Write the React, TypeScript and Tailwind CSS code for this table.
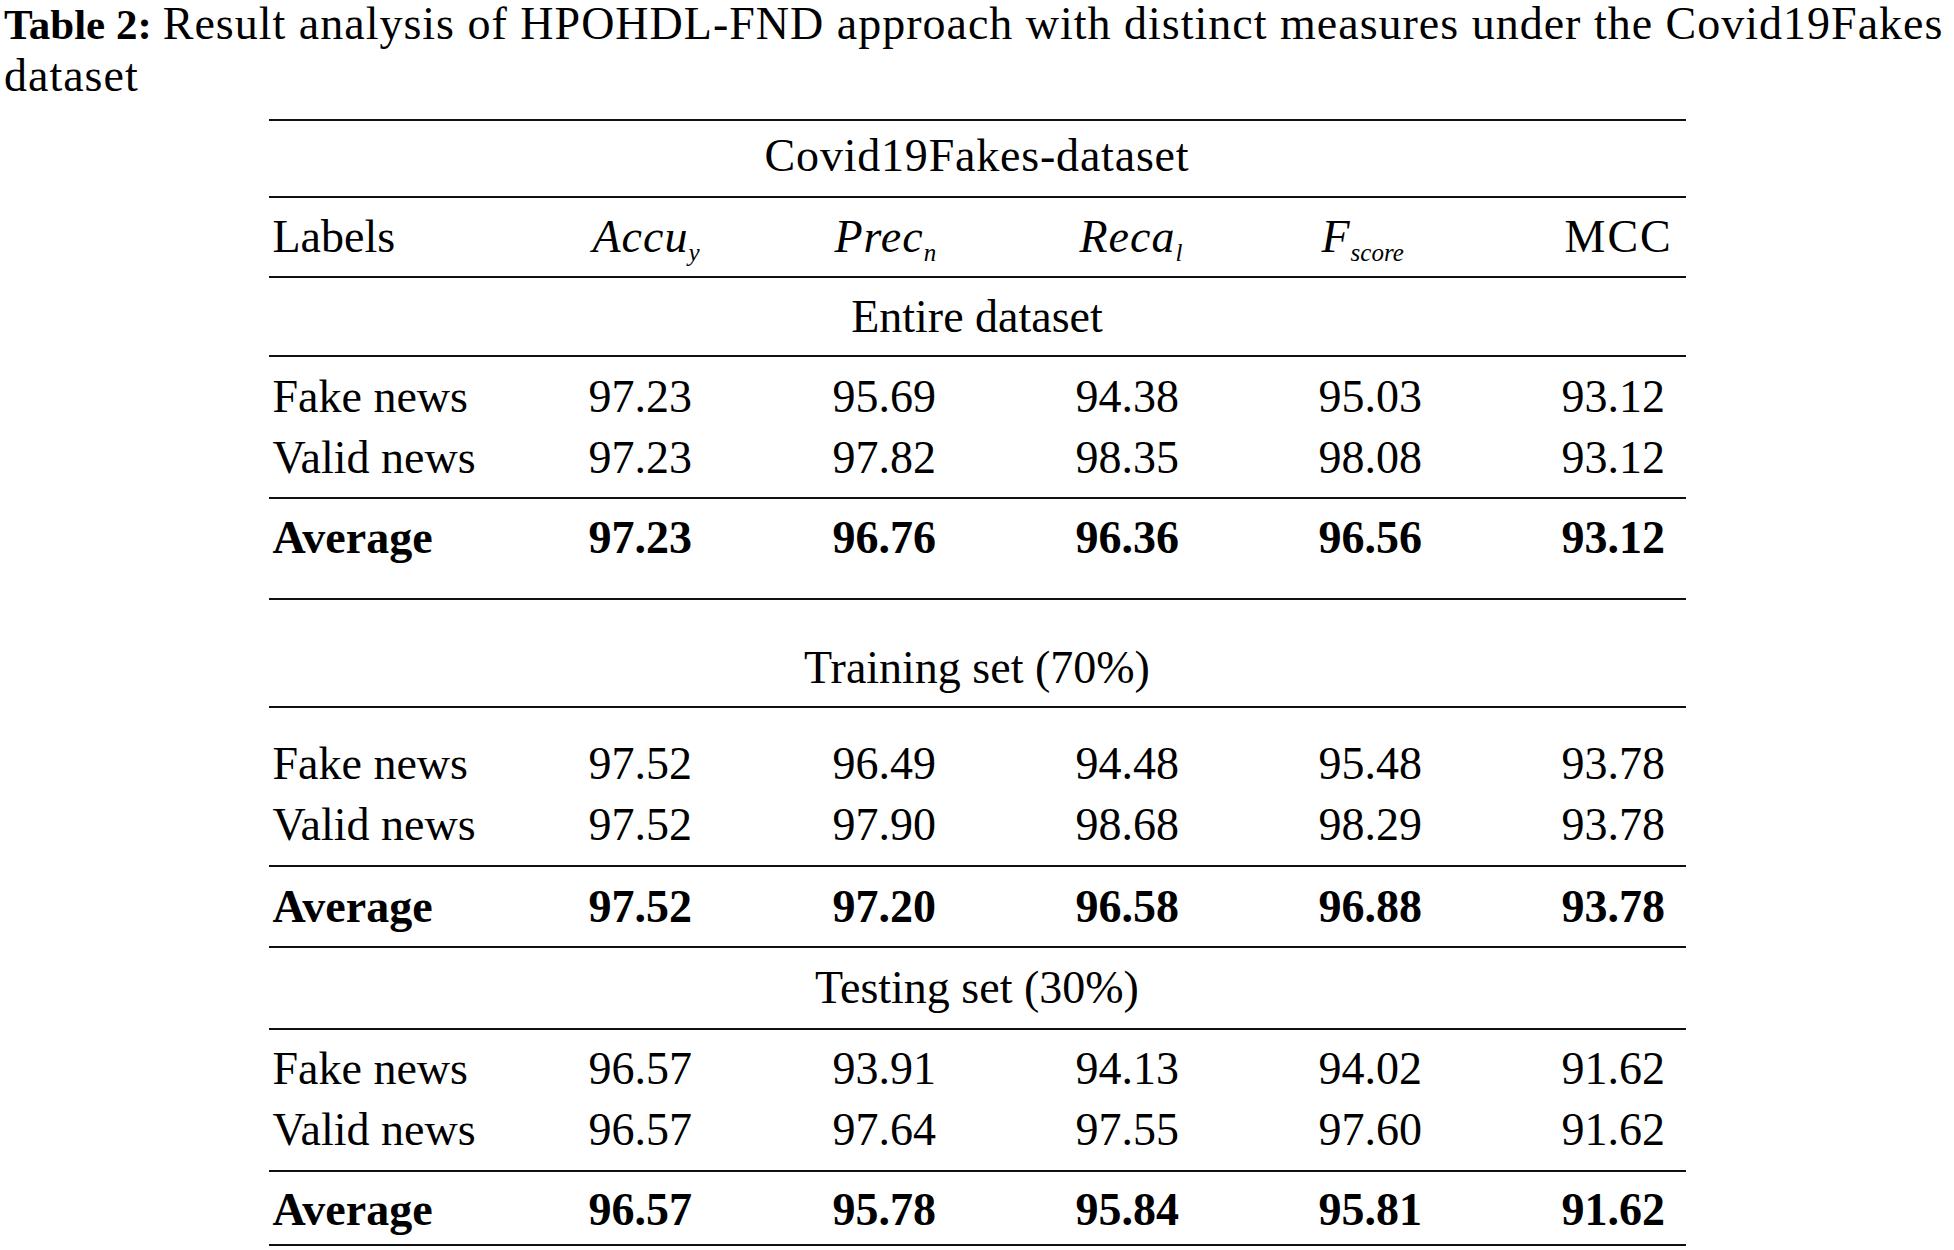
const serif = "font-['Liberation_Serif','Times_New_Roman',serif]"

type Section = {
  title: string
  // spacing classes for this section, tuned to the printed table
  headH: string
  dataPad: string
  avgH: string
  rows: string[][]
  avg: string[]
}

const sections: Section[] = [
  {
    title: "Entire dataset",
    headH: "h-[77px]",
    dataPad: "pt-[9px] pb-[9px]",
    avgH: "h-[99px] pb-[21px]",
    rows: [
      ["Fake news", "97.23", "95.69", "94.38", "95.03", "93.12"],
      ["Valid news", "97.23", "97.82", "98.35", "98.08", "93.12"],
    ],
    avg: ["Average", "97.23", "96.76", "96.36", "96.56", "93.12"],
  },
  {
    title: "Training set (70%)",
    headH: "h-[106px] pt-[29px]",
    dataPad: "pt-[25px] pb-[10px]",
    avgH: "h-[79px]",
    rows: [
      ["Fake news", "97.52", "96.49", "94.48", "95.48", "93.78"],
      ["Valid news", "97.52", "97.90", "98.68", "98.29", "93.78"],
    ],
    avg: ["Average", "97.52", "97.20", "96.58", "96.88", "93.78"],
  },
  {
    title: "Testing set (30%)",
    headH: "h-[80px]",
    dataPad: "pt-[8px] pb-[10px]",
    avgH: "h-[72px] pt-[3px]",
    rows: [
      ["Fake news", "96.57", "93.91", "94.13", "94.02", "91.62"],
      ["Valid news", "96.57", "97.64", "97.55", "97.60", "91.62"],
    ],
    avg: ["Average", "96.57", "95.78", "95.84", "95.81", "91.62"],
  },
]

const cols = "grid grid-cols-[320px_244px_243px_243px_243px_1fr] items-center"

function Rule() {
  return <div className="h-[2px] bg-[#111]" />
}

function DataRow({ cells, bold = false, h = "h-[61px]" }: { cells: string[]; bold?: boolean; h?: string }) {
  return (
    <div className={`${cols} ${h} ${bold ? "font-bold" : ""}`}>
      {cells.map((c, i) => (
        <div key={i} className={i === 0 ? "pl-[4px]" : ""}>
          {c}
        </div>
      ))}
    </div>
  )
}

function Metric({ base, sub }: { base: string; sub: string }) {
  return (
    <span className="italic tracking-[1px]">
      {base}
      <span className="text-[25px] tracking-normal relative top-[9px]">{sub}</span>
    </span>
  )
}

export default function App() {
  return (
    <div className={`min-h-screen bg-white text-black ${serif}`}>
      {/* Caption, broken where the print breaks it */}
      <div className="pl-[4px] -mt-[2px] text-[46px] leading-[52px]">
        <div className="h-[52px] flex items-baseline whitespace-nowrap">
          <span className="font-bold text-[43px] mr-[11px]">Table 2:</span>
          <span className="tracking-[1px]">
            Result analysis of HPOHDL-FND approach with distinct measures under the Covid19Fakes
          </span>
        </div>
        <div className="h-[52px] tracking-[1px]">dataset</div>
      </div>

      {/* Table */}
      <div className="mx-auto mt-[17px] w-[1417px] text-[46px] leading-none">
        <Rule />
        <div className="h-[75px] pb-[5px] flex items-center justify-center tracking-[0.8px]">Covid19Fakes-dataset</div>
        <Rule />
        <div className={`${cols} h-[78px]`}>
          <div className="pl-[4px]">Labels</div>
          <div className="pl-[4px]">
            <Metric base="Accu" sub="y" />
          </div>
          <div className="pl-[2px]">
            <Metric base="Prec" sub="n" />
          </div>
          <div className="pl-[4px]">
            <Metric base="Reca" sub="l" />
          </div>
          <div className="pl-[3px]">
            <Metric base="F" sub="score" />
          </div>
          <div className="pl-[3px] tracking-[2px]">MCC</div>
        </div>
        <Rule />

        {sections.map((s, si) => (
          <div key={s.title}>
            {si > 0 && <Rule />}
            <div className={`${s.headH} flex items-center justify-center`}>{s.title}</div>
            <Rule />
            <div className={s.dataPad}>
              {s.rows.map((r) => (
                <DataRow key={r[0]} cells={r} />
              ))}
            </div>
            <Rule />
            <div className={s.avgH}>
              <DataRow cells={s.avg} bold h="h-full" />
            </div>
          </div>
        ))}
        <Rule />
      </div>
    </div>
  )
}
